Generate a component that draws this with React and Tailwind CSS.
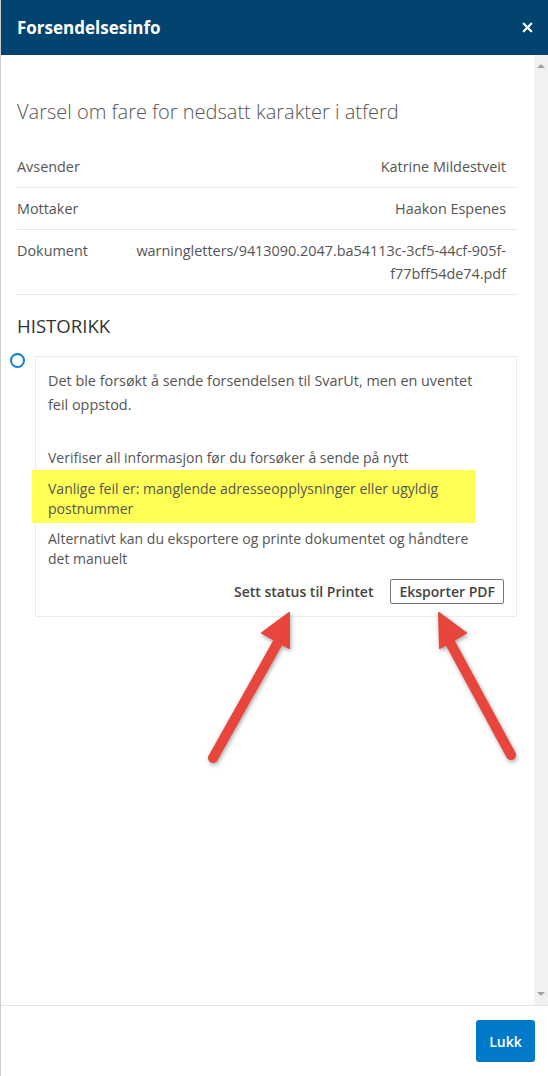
import { X } from 'lucide-react'

function Row({ label, children }) {
  return (
    <div className="flex border-b border-[#e6e6e6] py-[9px] text-[14.4px] leading-[23px] text-[#555]">
      <div className="w-[119px] shrink-0">{label}</div>
      <div className="flex-1 pr-[11px] text-right">{children}</div>
    </div>
  )
}

function Arrows() {
  return (
    <svg
      className="pointer-events-none absolute left-0 top-0 drop-shadow-[1px_2px_2px_rgba(0,0,0,0.35)]"
      width="548"
      height="1076"
      viewBox="0 0 548 1076"
    >
      <g fill="#e8453c" stroke="#e8453c" strokeLinejoin="round">
        <line x1="212" y1="758" x2="281" y2="635" strokeWidth="10" strokeLinecap="round" />
        <polygon points="288,613 261,633 288,648" strokeWidth="2" />
        <line x1="510" y1="755" x2="445" y2="635" strokeWidth="10" strokeLinecap="round" />
        <polygon points="438,613 465,633 439,648" strokeWidth="2" />
      </g>
    </svg>
  )
}

export default function App() {
  return (
    <div className="relative flex h-[1076px] w-[548px] flex-col overflow-hidden border-l border-[#cfcfcf] bg-white font-['Open_Sans',sans-serif]">
      <div className="flex h-[55px] shrink-0 items-center justify-between bg-[#02446f] pl-[16px] pr-[13px]">
        <h2 className="text-[17px] font-bold text-white">Forsendelsesinfo</h2>
        <X className="h-[15px] w-[15px] text-white" strokeWidth={3.5} />
      </div>

      <div className="flex min-h-0 flex-1">
        <div className="flex-1 pl-[16px] pr-[17px]">
          <h1 className="pt-[43px] text-[20px] font-light leading-[28px] text-[#555]">
            Varsel om fare for nedsatt karakter i atferd
          </h1>

          <div className="mt-[20px]">
            <Row label="Avsender">Katrine Mildestveit</Row>
            <Row label="Mottaker">Haakon Espenes</Row>
            <Row label="Dokument">
              warningletters/9413090.2047.ba54113c-3cf5-44cf-905f-
              <br />
              f77bff54de74.pdf
            </Row>
          </div>

          <h3 className="mt-[19px] text-[18.6px] font-medium leading-[24px] text-[#333]">HISTORIKK</h3>

          <div className="relative mt-[18px]">
            <div className="absolute left-[-7px] top-[-3px] h-[15px] w-[15px] rounded-full border-2 border-[#0a7dd1] bg-white" />
            <div className="ml-[18px] border border-[#ececec] px-[12px] pb-[12px] pt-[12px] text-[14px] text-[#555]">
              <p className="text-[14.4px] leading-[24px]">
                Det ble forsøkt å sende forsendelsen til SvarUt, men en uventet
                <br />
                feil oppstod.
              </p>
              <p className="mt-[31px] leading-[20px]">Verifiser all informasjon før du forsøker å sende på nytt</p>
              <div className="ml-[-16px] mt-[2px] w-[443px] bg-[#ffff55] pb-[4px] pl-[16px] pt-[9px] leading-[20px]">
                Vanlige feil er: manglende adresseopplysninger eller ugyldig
                <br />
                postnummer
              </div>
              <p className="mt-[6px] leading-[20px]">
                Alternativt kan du eksportere og printe dokumentet og håndtere
                <br />
                det manuelt
              </p>
              <div className="mt-[10px] flex items-center justify-end gap-[17px]">
                <button className="text-[14px] font-semibold text-[#444]">Sett status til Printet</button>
                <button className="h-[25px] rounded-[2px] border border-[#6f7780] px-[8px] text-[14px] font-semibold leading-[23px] text-[#444]">
                  Eksporter PDF
                </button>
              </div>
            </div>
          </div>
        </div>

        <div className="flex w-[14px] shrink-0 flex-col items-center justify-between bg-[#f1f1f1] py-[9px]">
          <div className="h-0 w-0 border-x-[4px] border-b-[4px] border-x-transparent border-b-[#a3a3a3]" />
          <div className="h-0 w-0 border-x-[4px] border-t-[4px] border-x-transparent border-t-[#a3a3a3]" />
        </div>
      </div>

      <div className="flex h-[71px] shrink-0 items-center justify-end border-t border-[#e3e3e3] pr-[13px]">
        <button className="h-[42px] w-[59px] rounded-[3px] bg-[#0079c9] text-[14px] font-semibold text-white">
          Lukk
        </button>
      </div>

      <Arrows />
    </div>
  )
}
